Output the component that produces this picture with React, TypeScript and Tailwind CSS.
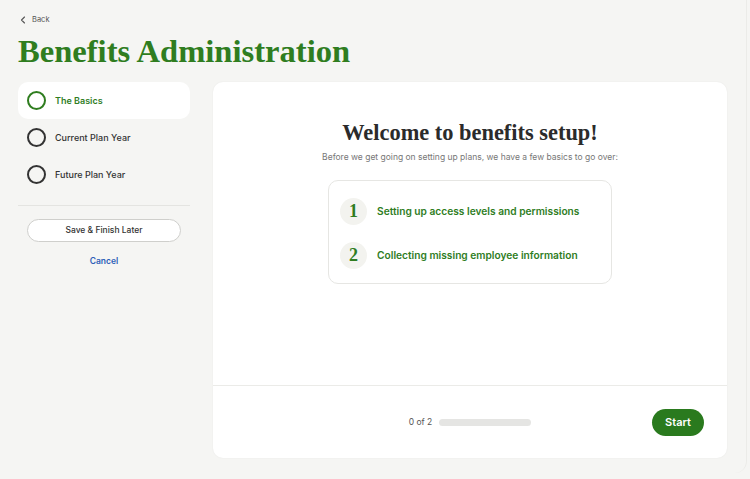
import React from "react";

const serif = { fontFamily: '"Liberation Serif", "DejaVu Serif", serif' };

function StepItem({ label, active }: { label: string; active?: boolean }) {
  return (
    <div
      className={`flex h-[37px] items-center gap-[9px] rounded-[10px] pl-[9px] ${
        active ? "bg-white" : ""
      }`}
    >
      <span
        className={`block h-[19px] w-[19px] rounded-full border-2 ${
          active ? "border-[#2f7d1f]" : "border-[#333333]"
        }`}
      />
      <span
        className={`text-[9px] ${
          active ? "font-semibold text-[#2f7d1f]" : "font-medium text-[#333333]"
        }`}
      >
        {label}
      </span>
    </div>
  );
}

function ListItem({ n, text }: { n: string; text: string }) {
  return (
    <div className="flex items-center gap-[10px]">
      <span
        className="flex h-[27px] w-[27px] items-center justify-center rounded-full bg-[#f3f3ef] text-[18px] font-bold text-[#2f7d1f]"
        style={serif}
      >
        {n}
      </span>
      <span className="text-[10.2px] font-semibold text-[#2f7d1f]">{text}</span>
    </div>
  );
}

export default function App() {
  return (
    <div
      className="h-[479px] w-[750px] overflow-hidden bg-[#f5f5f3]"
      style={{ fontFamily: 'Inter, "Liberation Sans", sans-serif' }}
    >
      <div className="h-[473px] w-[747px] rounded-br-[12px] border-r border-[#ebebe8] px-[18px] pt-[14px]">
        <div className="flex h-[12px] items-center gap-[6px] pl-[2px] text-[7.5px] text-[#555555]">
          <svg width="6" height="8" viewBox="0 0 6 8" fill="none">
            <path d="M4.5 1 L1.5 4 L4.5 7" stroke="#555" strokeWidth="1.1" strokeLinecap="round" strokeLinejoin="round" />
          </svg>
          <span>Back</span>
        </div>
        <h1
          className="mt-[7px] h-[36px] text-[32.6px] leading-[36px] font-bold text-[#2f7d1f]"
          style={serif}
        >
          Benefits Administration
        </h1>
        <div className="mt-[13px] flex gap-[23px]">
          <aside className="w-[172px]">
            <div className="flex flex-col">
              <StepItem label="The Basics" active />
              <StepItem label="Current Plan Year" />
              <StepItem label="Future Plan Year" />
            </div>
            <div className="mt-[12px] border-t border-[#e4e4e1]" />
            <div className="mt-[9px] px-[9px]">
              <button className="h-[23px] w-full rounded-full border border-[#cfcfcc] bg-white text-[8.5px] font-medium text-[#333333]">
                Save &amp; Finish Later
              </button>
            </div>
            <div className="mt-[13px] text-center text-[8.5px] font-semibold text-[#2d5fb8]">
              Cancel
            </div>
          </aside>
          <main className="flex h-[376px] w-[514px] flex-col rounded-[10px] bg-white shadow-[0_0_2px_rgba(0,0,0,0.06)]">
            <div className="flex flex-1 flex-col items-center pt-[37px]">
              <h2 className="text-[22.4px] leading-[28px] font-bold text-[#2b2b2b]" style={serif}>
                Welcome to benefits setup!
              </h2>
              <p className="mt-[4px] text-[8.5px] text-[#777777]">
                Before we get going on setting up plans, we have a few basics to go over:
              </p>
              <div className="mt-[16px] flex h-[104px] w-[284px] flex-col justify-center gap-[17px] rounded-[10px] border border-[#e6e6e3] pt-[3px] pl-[11px]">
                <ListItem n="1" text="Setting up access levels and permissions" />
                <ListItem n="2" text="Collecting missing employee information" />
              </div>
            </div>
            <div className="grid h-[73px] grid-cols-[1fr_auto_1fr] items-center border-t border-[#ebebe8]">
              <div />
              <div className="flex items-center gap-[7px]">
                <span className="text-[8.5px] text-[#555555]">0 of 2</span>
                <div className="h-[7px] w-[92px] rounded-full bg-[#e5e5e3]" />
              </div>
              <div className="flex justify-end pr-[23px]">
                <button className="h-[27px] w-[52px] rounded-full bg-[#2a7a1e] text-[11px] font-semibold text-white">
                  Start
                </button>
              </div>
            </div>
          </main>
        </div>
      </div>
    </div>
  );
}
